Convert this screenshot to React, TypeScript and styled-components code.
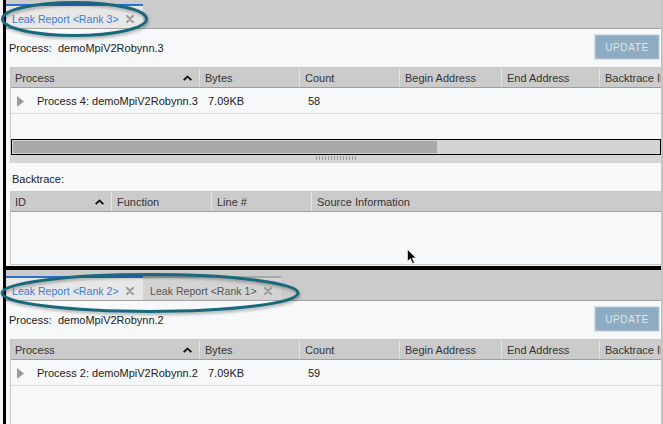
import React from 'react'
import styled, { createGlobalStyle } from 'styled-components'

const Global = createGlobalStyle`
  html, body { margin:0; padding:0; background:#f4f4f4; overflow:hidden; }
  body {
    font-family:"Liberation Sans", Arial, sans-serif;
    font-size:11px;
    color:#333;
  }
`

const procCols = '188px 100px 100px 102px 98px 1fr'
const btCols = '100px 100px 100px 1fr'

function CloseIcon(){
  return <svg width="8" height="8" viewBox="0 0 8 8">
    <path d="M1 1 L7 7 M7 1 L1 7" stroke="#9c9c9c" strokeWidth="2.2" strokeLinecap="round"/>
  </svg>
}

function SortUp(){
  return <svg width="9" height="6" viewBox="0 0 9 6">
    <path d="M0 4.6 L4.5 0.2 L9 4.6 L7.6 5.8 L4.5 2.8 L1.4 5.8Z" fill="#111"/>
  </svg>
}

function Expander(){
  return <svg width="7" height="11" viewBox="0 0 7 11">
    <path d="M0 0 L7 5.5 L0 11Z" fill="#9a9a9a"/>
  </svg>
}

function LeakPanel({tabs, process, row, tabOffset, children}:any){
  return <Panel>
    <TabBar offset={tabOffset}>
      {tabs.map((t:any)=> <Tab key={t.label} active={t.active}>
        <span>{t.label}</span>
        <CloseIcon/>
      </Tab>)}
    </TabBar>
    <Toolbar>
      <span>Process:&nbsp; {process}</span>
      <UpdateButton>UPDATE</UpdateButton>
    </Toolbar>
    <Table>
      <HeaderRow cols={procCols}>
        <HeadCell first>Process<SortUp/></HeadCell>
        <HeadCell>Bytes</HeadCell>
        <HeadCell>Count</HeadCell>
        <HeadCell>Begin Address</HeadCell>
        <HeadCell>End Address</HeadCell>
        <HeadCell>Backtrace ID</HeadCell>
      </HeaderRow>
      <BodyRow cols={procCols}>
        <ProcCell><Expander/>{row.name}</ProcCell>
        <Cell>{row.bytes}</Cell>
        <Cell>{row.count}</Cell>
        <Cell/>
        <Cell/>
        <Cell/>
      </BodyRow>
      <Filler/>
      {children}
    </Table>
  </Panel>
}

export default function App(){
  return <Page>
    <Global/>
    <Frame>
      <TopPanel>
        <LeakPanel
          tabOffset={4}
          tabs={[{label:'Leak Report <Rank 3>', active:true}]}
          process="demoMpiV2Robynn.3"
          row={{name:'Process 4: demoMpiV2Robynn.3', bytes:'7.09KB', count:'58'}}>
          <HScroll>
            <HThumb style={{width:424}}/>
          </HScroll>
        </LeakPanel>
        <Splitter><Grip/></Splitter>
        <SectionLabel>Backtrace:</SectionLabel>
        <BtTable>
          <HeaderRow cols={btCols}>
            <HeadCell first>ID<SortUp/></HeadCell>
            <HeadCell>Function</HeadCell>
            <HeadCell>Line #</HeadCell>
            <HeadCell>Source Information</HeadCell>
          </HeaderRow>
          <Filler/>
        </BtTable>
      </TopPanel>
      <Divider/>
      <LeakPanel
        tabOffset={6}
        tabs={[{label:'Leak Report <Rank 2>', active:true},{label:'Leak Report <Rank 1>', active:false}]}
        process="demoMpiV2Robynn.2"
        row={{name:'Process 2: demoMpiV2Robynn.2', bytes:'7.09KB', count:'59'}}/>
    </Frame>
    <Overlay width="663" height="424" viewBox="0 0 663 424">
      <ellipse cx="74.5" cy="19" rx="72" ry="16.5" fill="none" stroke="#18697b" strokeWidth="3"/>
      <ellipse cx="150" cy="293" rx="148" ry="18.5" fill="none" stroke="#18697b" strokeWidth="3"/>
    </Overlay>
    <Cursor width="10" height="16" viewBox="0 0 10 16">
      <path d="M0.5 0.5 L0.5 12.5 L3.4 9.6 L5.6 14.6 L7.4 13.8 L5.2 8.9 L9 8.9Z" fill="#000" stroke="#fff" strokeWidth="0.6"/>
    </Cursor>
  </Page>
}

const Page = styled.div`
  position:relative;
  width:663px;
  height:424px;
  overflow:hidden;
  background:#f4f4f4;
`
const Frame = styled.div`
  margin-left:3px;
  height:100%;
  box-sizing:border-box;
  border-left:3px solid #000;
  border-right:2px solid #c4c4c4;
  display:flex;
  flex-direction:column;
  background:#f7f8fa;
  overflow:hidden;
`
const TopPanel = styled.div`
  height:266px;
  flex:none;
  display:flex;
  flex-direction:column;
  overflow:hidden;
`
const Panel = styled.div`
  display:flex;
  flex-direction:column;
  flex:none;
`
const Divider = styled.div`
  height:4px;
  flex:none;
  background:#000;
`
interface TabBarProps { offset: number }
const TabBar = styled.div<TabBarProps>`
  display:flex;
  align-items:stretch;
  height:${p=>p.offset + 25}px;
  box-sizing:border-box;
  padding-top:${p=>p.offset}px;
  background:#cbcbcb;
  border-bottom:1px solid #a3a3a3;
`
interface TabProps { active: boolean }
const Tab = styled.div<TabProps>`
  display:flex;
  align-items:center;
  justify-content:space-between;
  box-sizing:border-box;
  width:${p=>p.active?137:138}px;
  padding:3px 9px 0 ${p=>p.active?6:7}px;
  border-top:2px solid ${p=>p.active?'#2f6fd3':'#a9a9a9'};
  background:${p=>p.active?'#e7e7e7':'#d3d3d3'};
  color:${p=>p.active?'#3a7ad6':'#555'};
  font-size:10.6px;
  white-space:nowrap;
`
const Toolbar = styled.div`
  height:38px;
  display:flex;
  align-items:center;
  justify-content:space-between;
  padding-left:3px;
  padding-right:1px;
  color:#222;
`
const UpdateButton = styled.div`
  width:66px;
  height:26px;
  box-sizing:border-box;
  margin-top:-2px;
  display:flex;
  align-items:center;
  justify-content:center;
  background:#8eacc1;
  border:1px solid #d6e2ea;
  outline:1px solid #a9bfcd;
  outline-offset:-2px;
  color:#dfe7ed;
  font-size:10px;
  letter-spacing:0.6px;
`
const Table = styled.div`
  margin-left:4px;
  height:87px;
  display:flex;
  flex-direction:column;
  border:1px solid #c7c7c7;
  border-right:none;
  border-bottom:none;
  overflow:hidden;
`
const BtTable = styled(Table)`
  height:74px;
  border-bottom:1px solid #c7c7c7;
  box-sizing:border-box;
  flex:none;
`
interface ColsProps { cols: string }
const HeaderRow = styled.div<ColsProps>`
  display:grid;
  grid-template-columns:${p=>p.cols};
  height:20px;
  flex:none;
  box-sizing:border-box;
  background:#cbcbcb;
  border-bottom:1px solid #9e9e9e;
`
interface HeadCellProps { first?: boolean }
const HeadCell = styled.div<HeadCellProps>`
  display:flex;
  align-items:center;
  justify-content:space-between;
  padding:1px 7px 0 ${p=>p.first?4:5}px;
  border-left:${p=>p.first?'none':'1px solid #e4e4e4'};
  white-space:nowrap;
  overflow:hidden;
  color:#333;
`
const BodyRow = styled.div<ColsProps>`
  display:grid;
  grid-template-columns:${p=>p.cols};
  height:26px;
  flex:none;
  box-sizing:border-box;
  border-bottom:1px solid #d9d9d9;
  color:#222;
`
const Cell = styled.div`
  display:flex;
  align-items:center;
  padding:1px 0 0 9px;
  white-space:nowrap;
  overflow:hidden;
`
const ProcCell = styled(Cell)`
  padding-left:6px;
  gap:13px;
`
const Filler = styled.div`
  flex:1;
`
const HScroll = styled.div`
  height:16px;
  flex:none;
  box-sizing:border-box;
  border:1px solid #000;
  background:#d4d4d4;
  padding:1px;
  display:flex;
`
const HThumb = styled.div`
  height:100%;
  background:#a9a9a9;
`
const Splitter = styled.div`
  height:8px;
  flex:none;
  margin-left:4px;
  background:#d6d6d6;
  display:flex;
  justify-content:center;
  align-items:flex-start;
`
const Grip = styled.div`
  width:40px;
  height:4px;
  margin-top:1px;
  background:repeating-linear-gradient(90deg, #9a9a9a 0 1px, transparent 1px 3px);
`
const SectionLabel = styled.div`
  margin:10px 0 5px 6px;
  height:13px;
  line-height:13px;
  color:#222;
`
const Overlay = styled.svg`
  position:absolute;
  left:0;
  top:0;
  pointer-events:none;
  filter:drop-shadow(1px 2px 1.5px rgba(0,0,0,0.3));
`
const Cursor = styled.svg`
  position:absolute;
  left:407px;
  top:249px;
`
